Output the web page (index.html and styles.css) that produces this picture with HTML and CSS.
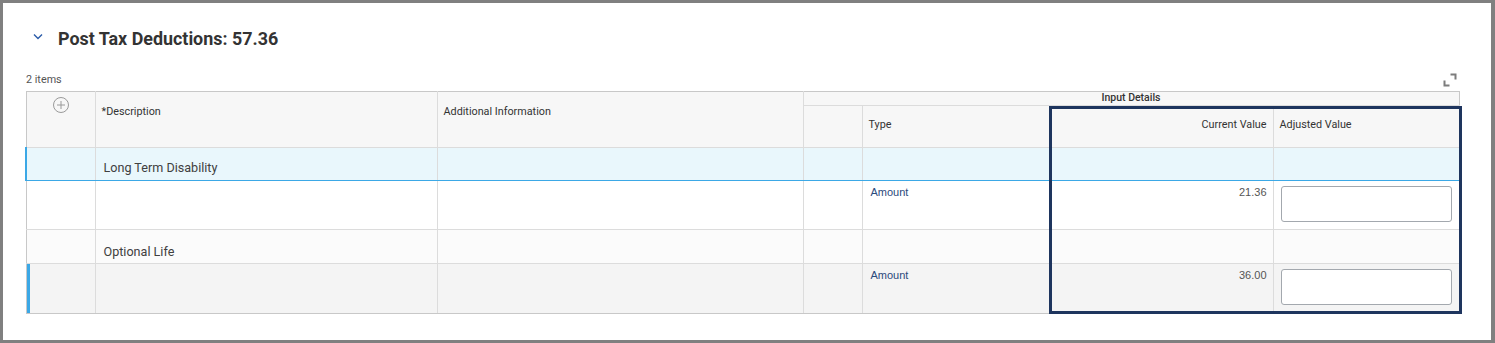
FILE: index.html
```html
<!DOCTYPE html>
<html lang="en">
<head>
    <meta charset="UTF-8">
    <meta name="viewport" content="width=device-width, initial-scale=1.0">
    <title>Post Tax Deductions</title>
    <link rel="stylesheet" href="styles.css">
</head>
<body>
    <div class="panel">
        <!-- Section heading -->
        <div class="section-header">
            <svg class="chevron" width="10" height="7" viewBox="0 0 10 7">
                <path d="M1 1.5 L5 5.5 L9 1.5" fill="none" stroke="#2b5ba8" stroke-width="1.4"/>
            </svg>
            <h2 class="section-title">Post Tax Deductions: 57.36</h2>
        </div>

        <div class="toolbar">
            <span class="item-count">2 items</span>
            <svg class="expand-icon" width="14" height="14" viewBox="0 0 14 14">
                <path d="M7.5 1.5 H12.5 V6.5" fill="none" stroke="#7d7d7d" stroke-width="2"/>
                <path d="M1.5 7.5 V12.5 H6.5" fill="none" stroke="#7d7d7d" stroke-width="2"/>
            </svg>
        </div>

        <div class="grid-wrap">
            <table class="grid">
                <colgroup>
                    <col style="width:69px">
                    <col style="width:342px">
                    <col style="width:366px">
                    <col style="width:59px">
                    <col style="width:188px">
                    <col style="width:223px">
                    <col style="width:186px">
                </colgroup>
                <thead>
                    <tr class="head-top">
                        <th rowspan="2" class="add-col">
                            <svg width="16" height="16" viewBox="0 0 16 16">
                                <circle cx="8" cy="8" r="7.5" fill="none" stroke="#9a9a9a" stroke-width="1"/>
                                <path d="M8 4 V12 M4 8 H12" stroke="#9a9a9a" stroke-width="1"/>
                            </svg>
                        </th>
                        <th rowspan="2" class="head-label">*Description</th>
                        <th rowspan="2" class="head-label">Additional Information</th>
                        <th colspan="4" class="group-label">Input Details</th>
                    </tr>
                    <tr class="head-sub">
                        <th></th>
                        <th>Type</th>
                        <th class="num">Current Value</th>
                        <th>Adjusted Value</th>
                    </tr>
                </thead>
                <tbody>
                    <tr class="group-row selected">
                        <td></td>
                        <td class="desc">Long Term Disability</td>
                        <td></td>
                        <td></td>
                        <td></td>
                        <td></td>
                        <td></td>
                    </tr>
                    <tr class="detail-row">
                        <td></td>
                        <td></td>
                        <td></td>
                        <td></td>
                        <td class="type-cell"><span class="link">Amount</span></td>
                        <td class="num">21.36</td>
                        <td class="input-cell"><input type="text" class="value-input"></td>
                    </tr>
                    <tr class="group-row alt">
                        <td></td>
                        <td class="desc">Optional Life</td>
                        <td></td>
                        <td></td>
                        <td></td>
                        <td></td>
                        <td></td>
                    </tr>
                    <tr class="detail-row active">
                        <td></td>
                        <td></td>
                        <td></td>
                        <td></td>
                        <td class="type-cell"><span class="link">Amount</span></td>
                        <td class="num">36.00</td>
                        <td class="input-cell"><input type="text" class="value-input"></td>
                    </tr>
                </tbody>
            </table>
            <!-- focus frame over the value columns -->
            <div class="focus-frame"></div>
        </div>
    </div>
</body>
</html>
```

FILE: styles.css
```css
/* Page frame */
html, body {
    margin: 0;
    padding: 0;
}

body {
    background-color: #808080;
    padding: 3px 4px 3px 3px;
    font-family: Roboto, "Liberation Sans", Arial, sans-serif;
    color: #333333;
}

.panel {
    background-color: #ffffff;
    height: 337px;
    padding: 0 32px 0 23px;
    box-sizing: border-box;
    overflow: hidden;
}

/* Heading */
.section-header {
    display: flex;
    align-items: center;
    padding-top: 24px;
    height: 24px;
}

.chevron {
    margin-left: 7px;
    margin-right: 15px;
    margin-top: -6px;
}

.section-title {
    margin: 0;
    font-size: 17.9px;
    font-weight: 700;
    line-height: 24px;
    color: #333333;
}

.toolbar {
    display: flex;
    justify-content: space-between;
    align-items: center;
    margin-top: 22px;
    height: 14px;
    margin-bottom: 4px;
}

.item-count {
    font-size: 10.8px;
    color: #555555;
    line-height: 14px;
}

.expand-icon {
    margin-right: 2px;
    margin-top: -1px;
}

/* Grid */
.grid-wrap {
    position: relative;
    width: 1433px;
    margin-left: -1px;
}

.grid {
    width: 1433px;
    table-layout: fixed;
    border-collapse: collapse;
    font-size: 10.8px;
}

.grid th,
.grid td {
    border: 1px solid #dcdcdc;
    padding: 0 6px;
    vertical-align: top;
    text-align: left;
}

.grid thead th {
    background-color: #f7f7f7;
    font-weight: 400;
    color: #333333;
    line-height: 14px;
}

.grid tr:first-child th {
    border-top-color: #c8c8c8;
}

.grid th:first-child,
.grid td:first-child {
    border-left-color: #c8c8c8;
}

.grid tr > :last-child {
    border-right-color: #c8c8c8;
}

.head-top {
    height: 14px;
}

.add-col {
    text-align: center !important;
    padding-top: 5px !important;
}

.head-label {
    padding-top: 13px !important;
}

.group-label {
    text-align: center !important;
    font-weight: 500 !important;
    font-size: 10.5px;
    line-height: 12px !important;
}

.head-sub {
    height: 42px;
}

.head-sub th {
    padding-top: 12px;
}

.grid th.num,
.grid td.num {
    text-align: right;
}

/* Body rows */
.group-row {
    height: 33px;
}

.group-row .desc {
    font-size: 12.6px;
    line-height: 16px;
    padding-top: 12px;
    padding-left: 8px;
    color: #404040;
}

.selected td {
    background-color: #e9f7fc;
    border-top: 1px solid #3ba8e6;
    border-bottom: 1px solid #3ba8e6;
}

.selected td:first-child {
    border-left: 2px solid #3ba8e6;
}

.selected td:last-child {
    border-right: 1px solid #3ba8e6;
}

.alt {
    height: 34px;
}

.alt td {
    background-color: #fbfbfb;
}

.group-row.alt .desc {
    padding-top: 14px;
}

.detail-row {
    height: 49px;
}

.detail-row td {
    font-family: "Liberation Sans", Arial, sans-serif;
    font-size: 11px;
    line-height: 14px;
    padding-top: 4px;
}

.detail-row td.type-cell {
    padding-left: 8px;
}

.active {
    height: 50px;
}

.active td {
    background-color: #f4f4f4;
}

.active td:first-child {
    box-shadow: inset 3px 0 #3ba8e6;
}

.grid tbody tr:last-child td {
    border-bottom-color: #c8c8c8;
}

.link {
    color: #2c4a7c;
}

.detail-row td.num {
    color: #555555;
}

.detail-row td.input-cell {
    padding: 5px 0 0 7px;
}

.value-input {
    display: block;
    width: 171px;
    height: 36px;
    box-sizing: border-box;
    border: 1px solid #a3a8ae;
    border-radius: 3px;
    background-color: #ffffff;
    margin: 0;
}

/* Frame drawn over the value columns */
.focus-frame {
    position: absolute;
    left: 1024px;
    top: 15px;
    width: 413px;
    height: 208px;
    border: 3px solid #1e355e;
    box-sizing: border-box;
    pointer-events: none;
}
```
